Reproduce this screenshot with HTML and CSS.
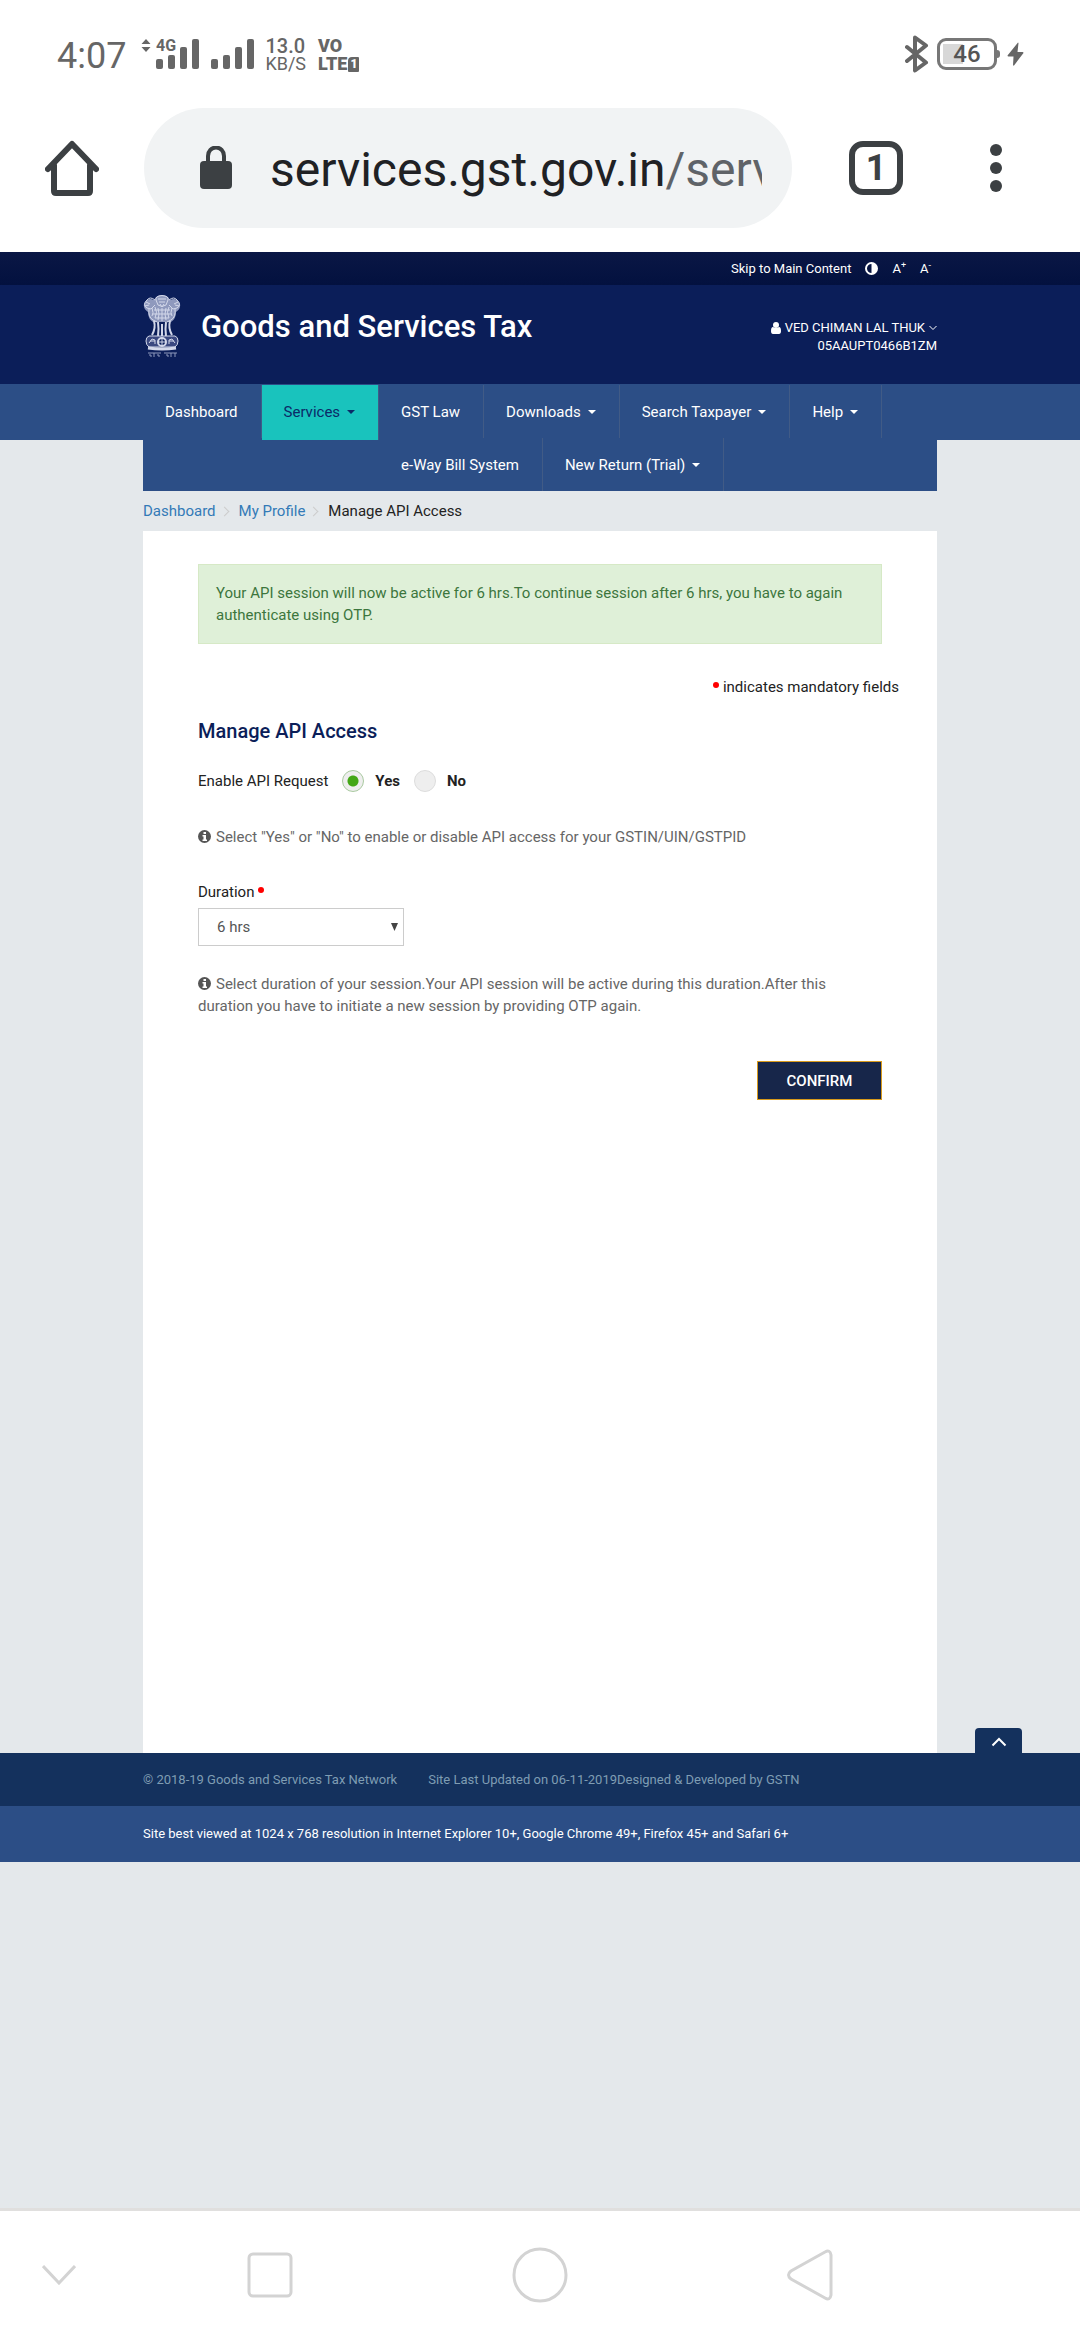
FILE: index.html
```html
<!DOCTYPE html>
<html lang="en">
<head>
<meta charset="utf-8">
<meta name="viewport" content="width=device-width, initial-scale=1">
<title>Manage API Access</title>
<link rel="stylesheet" href="styles.css">
</head>
<body>
<div class="status-bar">
  <div class="status-left">
    <span class="clock">4:07</span>
    <svg class="signal" width="114" height="44" viewBox="0 -6 114 44" fill="#666" aria-hidden="true">
      <path d="M5 1l4.500 5h-9zM5 14l4.500-5h-9z"/>
      <rect x="15" y="21" width="7" height="10" rx="2"/><rect x="27" y="17" width="7" height="14" rx="2"/><rect x="39" y="9" width="7" height="22" rx="2"/><rect x="51" y="1" width="7" height="30" rx="2"/>
      <rect x="70" y="21" width="7" height="10" rx="2"/><rect x="82" y="17" width="7" height="14" rx="2"/><rect x="94" y="9" width="7" height="22" rx="2"/><rect x="106" y="1" width="7" height="30" rx="2"/>
      <text x="15" y="13" class="net-type">4G</text>
    </svg>
    <span class="speed"><span class="speed-value">13.0</span><span class="speed-unit">KB/S</span></span>
    <span class="volte"><span>VO</span><span class="volte-row">LTE<span class="sim">1</span></span></span>
  </div>
  <div class="status-right">
    <svg width="24" height="38" viewBox="0 0 24 38" fill="none" stroke="#666" stroke-width="4" stroke-linejoin="round" stroke-linecap="round" aria-hidden="true"><path d="M2 12l19 15.500-11 8V2.500l11 8L2 26"/></svg>
    <span class="battery">46</span>
    <svg width="17" height="24" viewBox="0 0 17 24" fill="#666" aria-hidden="true"><path d="M11 0.500L0.500 13.500q0 1 1 1h5l-.5 9h1L16.500 11q0-1-1-1h-5l1-9z"/></svg>
  </div>
</div>

<div class="toolbar">
  <button class="tool" type="button" aria-label="Home"><svg width="54" height="56" viewBox="0 0 54 56" fill="none" stroke="#3c4043" stroke-width="6" stroke-linecap="round" stroke-linejoin="round"><path d="M3 29L27 4l24 25M9 25v26q0 2 2 2h32q2 0 2-2V25"/></svg></button>
  <div class="omnibox">
    <svg class="lock" width="32" height="44" viewBox="0 0 32 44" aria-hidden="true"><rect y="15" width="32" height="28" rx="4" fill="#3c4043"/><path d="M8 17v-7a8 8.500 0 0 1 16 0v7" fill="none" stroke="#3c4043" stroke-width="4"/></svg>
    <span class="url">services.gst.gov.in<span class="url-path">/serv</span></span>
  </div>
  <button class="tool tabs" type="button" aria-label="Open tabs">1</button>
  <button class="tool menu" type="button" aria-label="More options"><svg width="12" height="48" viewBox="0 0 12 48" fill="#3c4043"><circle cx="6" cy="6" r="6"/><circle cx="6" cy="24" r="6"/><circle cx="6" cy="42" r="6"/></svg></button>
</div>

<div class="site">
  <div class="skip-bar">
    <div class="container skip-links">
      <a href="#main">Skip to Main Content</a>
      <a href="#contrast" aria-label="Contrast"><svg width="13" height="13" viewBox="0 0 13 13"><circle cx="6.500" cy="6.500" r="5.500" fill="none" stroke="#fff" stroke-width="2"/><path d="M6.500 1v11a5.500 5.500 0 0 0 0-11z" fill="#fff"/></svg></a>
      <a href="#larger">A<sup>+</sup></a>
      <a href="#smaller">A<sup>-</sup></a>
    </div>
  </div>

  <header class="masthead">
    <div class="container masthead-row">
      <svg class="emblem" width="38" height="63" viewBox="0 0 38 63" fill="none" stroke="#d3d8ea" stroke-width="1" aria-hidden="true">
        <path fill="#8f99bd" stroke="none" d="M13 2q6-4 12 0l2 3q7-3 10 4 1 5-4 8 0 7-5 10H10q-5-3-5-10-5-3-4-8 3-7 10-4z"/>
        <path d="M13 5q-1-4 6-4.500Q26 1 25 5l-2 5q-4 3-8 0zM15 4h8M16 7h6M17 9l2 3 2-3M12 5Q7 1 4 5q-5 5 0 8l4 1 4-4M3 7l4 2M2 11l4-1M26 5q5-4 8 0 5 5 0 8l-4 1-4-4M35 7l-4 2M36 11l-4-1M6 14q-1 8 4 11l4 2M32 14q1 8-4 11l-4 2M9 13q2 5 0 8M12 12q3 5 0 11M15 13q2 6 0 12M19 13v13M23 13q-2 6 0 12M26 12q-3 5 0 11M29 13q-2 5 0 8M11 15h16M10 19h18M12 23h14"/>
        <path stroke-width="2" d="M11 26q2 7-2 14M15 27q1 7 0 14M19 29v12M23 27q-1 7 0 14M27 26q-2 7 2 14"/>
        <path fill="#3a4880" stroke-width="1" d="M6 41h26q3 1 3 5t-3 6H6q-3-2-3-6t3-5z"/>
        <path stroke-width="3" d="M5 53q14 2 28 0"/>
        <circle cx="19" cy="47" r="4" fill="#0b1e59" stroke-width="2"/><path d="M19 43v8M15 47h8M6 48l3-4 3 1v4M7 46h5M26 49v-4l3-1 3 4M26 46h5"/>
        <path stroke="#8f99bd" d="M5 58h13M21 58h13M6 60h2v2M11 58v4M14 60h2v2M23 60h2v2M28 58v4M32 58v4"/>
      </svg>
      <h1 class="brand">Goods and Services Tax</h1>
      <div class="account">
        <button class="account-name" type="button"><svg width="10" height="12" viewBox="0 0 10 12" fill="#fff" aria-hidden="true"><circle cx="5" cy="3" r="3"/><path d="M0 9q0-4 2-4 3 2 6 0 2 0 2 4 0 3-2 3H2q-2 0-2-3z"/></svg><span>VED CHIMAN LAL THUK</span><svg width="8" height="6" viewBox="0 0 8 6" fill="none" stroke="#fff" aria-hidden="true"><path d="M.5 1L4 4.500 7.500 1"/></svg></button>
        <div>05AAUPT0466B1ZM</div>
      </div>
    </div>
  </header>

  <nav class="main-nav" aria-label="Main">
    <ul class="container nav-list">
      <li><a href="#dashboard">Dashboard</a></li>
      <li class="active"><a class="has-menu" href="#services">Services</a></li>
      <li><a href="#law">GST Law</a></li>
      <li><a class="has-menu" href="#downloads">Downloads</a></li>
      <li><a class="has-menu" href="#search">Search Taxpayer</a></li>
      <li><a class="has-menu" href="#help">Help</a></li>
      <li><a href="#eway">e-Way Bill System</a></li>
      <li><a class="has-menu" href="#return">New Return (Trial)</a></li>
    </ul>
  </nav>

  <div class="container">
    <ol class="breadcrumb">
      <li><a href="#dashboard">Dashboard</a></li>
      <li><a href="#profile">My Profile</a></li>
      <li>Manage API Access</li>
    </ol>
    <main class="panel" id="main">
      <div class="alert" role="status">Your API session will now be active for 6 hrs.To continue session after 6 hrs, you have to again authenticate using OTP.</div>
      <p class="mandatory"><span class="dot"></span>indicates mandatory fields</p>
      <h2 class="heading">Manage API Access</h2>
      <form>
        <div class="enable" role="radiogroup" aria-labelledby="enable-label">
          <span id="enable-label">Enable API Request</span>
          <label class="choice"><input type="radio" name="enable" checked>Yes</label>
          <label class="choice"><input type="radio" name="enable">No</label>
        </div>
        <p class="help help-enable"><svg class="info" width="13" height="13" viewBox="0 0 13 13" aria-hidden="true"><circle cx="6.500" cy="6.500" r="6.500" fill="#555"/><path d="M5.500 2h2.500v2h-2.500zM4.500 5h3.500v4.500h1v1.500h-4.500v-1.500h1v-3h-1z" fill="#fff"/></svg>Select "Yes" or "No" to enable or disable API access for your GSTIN/UIN/GSTPID</p>
        <label class="field-label" for="duration">Duration<span class="dot"></span></label>
        <div class="select-wrap">
          <select id="duration"><option>6 hrs</option></select>
          <svg class="select-arrow" width="7" height="8" viewBox="0 0 7 8" fill="#444" aria-hidden="true"><path d="M0 0h7L3.500 8z"/></svg>
        </div>
        <p class="help help-duration"><svg class="info" width="13" height="13" viewBox="0 0 13 13" aria-hidden="true"><circle cx="6.500" cy="6.500" r="6.500" fill="#555"/><path d="M5.500 2h2.500v2h-2.500zM4.500 5h3.500v4.500h1v1.500h-4.500v-1.500h1v-3h-1z" fill="#fff"/></svg>Select duration of your session.Your API session will be active during this duration.After this duration you have to initiate a new session by providing OTP again.</p>
        <div class="actions"><button class="confirm" type="submit">CONFIRM</button></div>
      </form>
    </main>
  </div>

  <footer class="footer">
    <a class="to-top" href="#top" aria-label="Back to top"><svg width="16" height="10" viewBox="0 0 16 10" fill="none" stroke="#fff" stroke-width="2"><path d="M1.500 8.500L8 2l6.500 6.500"/></svg></a>
    <div class="footer-copy"><div class="container footer-row"><span>© 2018-19 Goods and Services Tax Network</span><span>Site Last Updated on 06-11-2019Designed &amp; Developed by GSTN</span></div></div>
    <div class="footer-note"><div class="container">Site best viewed at 1024 x 768 resolution in Internet Explorer 10+, Google Chrome 49+, Firefox 45+ and Safari 6+</div></div>
  </footer>
</div>

<div class="system-nav">
  <button class="sys hide" type="button" aria-label="Hide"><svg width="34" height="20" viewBox="0 0 34 20"><path d="M1 1l16 17L33 1"/></svg></button>
  <button class="sys" type="button" aria-label="Recent apps"><svg width="46" height="46" viewBox="0 0 46 46"><rect x="2" y="2" width="42" height="42" rx="4"/></svg></button>
  <button class="sys" type="button" aria-label="Home screen"><svg width="56" height="56" viewBox="0 0 56 56"><circle cx="28" cy="28" r="26"/></svg></button>
  <button class="sys" type="button" aria-label="Back"><svg width="46" height="52" viewBox="0 0 46 52"><path d="M38 3q5-3 6 3v40q-1 6-6 3L4 30q-5-4 0-8z"/></svg></button>
</div>
</body>
</html>
```
FILE: styles.css
```css
* { box-sizing: border-box; }

body {
  margin: 0;
  min-height: 100vh;
  display: flex;
  flex-direction: column;
  background: #fff;
  color: #222;
  font: 15px/22px Roboto, "Liberation Sans", sans-serif;
}

a { color: inherit; text-decoration: none; }
p, h1, h2, ul, ol { margin: 0; padding: 0; }
ul, ol { list-style: none; }
button { border: 0; padding: 0; background: none; font: inherit; color: inherit; }
svg { display: block; }

/* Phone status bar */
.status-bar {
  display: flex;
  justify-content: space-between;
  height: 108px;
  padding: 0 56px 0 57px;
  color: #666;
}
.status-left, .status-right { display: flex; align-items: center; height: 108px; }
.clock { padding-top: 3px; font-size: 36px; line-height: 36px; }
.signal { margin-left: 15px; }
.net-type { font-size: 16px; font-weight: 700; }
.speed { display: flex; flex-direction: column; margin-left: 10px; padding-top: 2px; line-height: 17px; }
.speed-value { font-size: 20px; font-weight: 500; }
.speed-unit { font-size: 18px; font-weight: 400; }
.volte { display: flex; flex-direction: column; margin-left: 12px; padding-top: 2px; font-size: 18px; line-height: 18px; font-weight: 900; }
.volte-row { display: flex; gap: 1px; }
.sim {
  width: 11px;
  height: 15px;
  margin-top: 2px;
  border-radius: 4px 1px 1px 1px;
  background: #666;
  color: #fff;
  font-size: 12px;
  line-height: 15px;
  text-align: center;
}
.status-right { gap: 8px; }
.battery {
  position: relative;
  width: 60px;
  height: 32px;
  margin-right: 2px;
  border: 3px solid #777;
  border-radius: 9px;
  background: linear-gradient(#d8d8d8, #d8d8d8) 3px 3px / 20px 20px no-repeat;
  color: #555;
  font-size: 24px;
  font-weight: 500;
  line-height: 27px;
  text-align: center;
}
.battery::after {
  content: "";
  position: absolute;
  top: 9px;
  right: -6px;
  width: 3px;
  height: 8px;
  border-radius: 0 3px 3px 0;
  background: #777;
}

/* Browser toolbar */
.toolbar { display: flex; align-items: center; height: 144px; padding: 0 78px 24px 45px; }
.tool { flex: none; }
.omnibox {
  flex: 1;
  display: flex;
  align-items: center;
  min-width: 0;
  height: 120px;
  margin-left: 45px;
  padding: 0 30px 0 56px;
  border-radius: 60px;
  background: #f1f3f4;
}
.lock { flex: none; margin-right: 38px; }
.url {
  flex: 1;
  overflow: hidden;
  padding-top: 4px;
  color: #202124;
  font-size: 48px;
  line-height: 60px;
  white-space: nowrap;
}
.url-path { color: #5f6368; }
.tabs {
  width: 54px;
  height: 54px;
  margin-left: 57px;
  border: 6px solid #3c4043;
  border-radius: 14px;
  color: #3c4043;
  font-size: 36px;
  font-weight: 700;
  line-height: 42px;
}
.menu { margin-left: 87px; }

/* Site */
.site { flex: 1; background: #e4e8eb; }
.container { width: 100%; max-width: 794px; margin: 0 auto; }

.skip-bar { background: linear-gradient(#0a1745, #03113f); color: #fff; font-size: 13px; }
.skip-links { display: flex; align-items: center; justify-content: flex-end; gap: 14px; height: 33px; padding-right: 6px; }
.skip-links sup { font-size: 9px; line-height: 0; }

.masthead { background: #0b1e59; color: #fff; }
.masthead-row { display: flex; height: 99px; padding-top: 10px; }
.brand { margin: 12px 0 0 20px; font-size: 31px; font-weight: 500; line-height: 40px; }
.account { margin: 24px 0 0 auto; font-size: 13px; line-height: 18px; text-align: right; }
.account-name { display: flex; align-items: center; gap: 4px; margin-left: auto; }

.main-nav { background: linear-gradient(#2c4e86 56px, transparent 56px); }
.nav-list { display: flow-root; padding-top: 1px; background: #2c4e86; color: #fff; }
.nav-list li { float: left; height: 53px; border-right: 1px solid #415b86; }
.nav-list a { display: flex; align-items: center; height: 53px; padding: 0 23px 0 22px; }
.nav-list .active { height: 55px; background: #19c3bd; color: #0b2a68; }
.has-menu::after {
  content: "";
  margin-left: 7px;
  border: 4px solid transparent;
  border-top-color: currentColor;
  border-bottom: 0;
}

.breadcrumb { display: flex; height: 40px; align-items: center; }
.breadcrumb a { color: #337ab7; }
.breadcrumb li { display: flex; align-items: center; }
.breadcrumb li + li::before {
  content: "";
  width: 6px;
  height: 6px;
  margin: 0 11px 0 5px;
  border: solid #ccc;
  border-width: 1px 1px 0 0;
  transform: rotate(45deg);
}

.panel { min-height: 1222px; padding: 33px 55px; background: #fff; }
.alert {
  height: 80px;
  padding: 17px;
  border: 1px solid #d6e9c6;
  background: #dff0d8;
  color: #3c763d;
}
.dot { display: inline-block; width: 6px; height: 6px; border-radius: 50%; background: #f00; vertical-align: 4px; }
.mandatory { margin: 32px -17px 0 0; text-align: right; }
.mandatory .dot { margin-right: 4px; }
.heading { margin-top: 20px; color: #0b1e59; font-size: 20px; font-weight: 500; line-height: 26px; }

.enable { display: flex; align-items: center; height: 24px; margin-top: 25px; }
.choice { display: flex; align-items: center; margin-left: 14px; font-weight: 700; }
.choice input {
  appearance: none;
  width: 22px;
  height: 22px;
  margin: 0 11px 0 0;
  border: 1px solid #ddd;
  border-radius: 50%;
  background: #eee;
}
.choice input:checked {
  border-color: #a9c9a0;
  background: radial-gradient(circle, #43a716 5px, #eee 6px);
}
.help { color: #666; }
.info { display: inline-block; margin-right: 5px; vertical-align: -1px; }
.help-enable { margin-top: 33px; }
.field-label { display: block; margin-top: 33px; }
.field-label .dot { margin-left: 4px; }
.select-wrap { position: relative; width: 206px; margin-top: 5px; }
.select-wrap select {
  display: block;
  appearance: none;
  width: 100%;
  height: 38px;
  padding: 0 18px;
  border: 1px solid #ccc;
  border-radius: 0;
  background: #fff;
  color: #555;
  font: inherit;
}
.select-arrow { position: absolute; top: 15px; right: 6px; pointer-events: none; }
.help-duration { margin-top: 27px; }
.actions { display: flex; justify-content: flex-end; margin-top: 44px; }
.confirm {
  width: 125px;
  height: 39px;
  border: 1px solid #d99b1c;
  background: #17264a;
  color: #fff;
  font-weight: 500;
}

.footer { position: relative; font-size: 13px; }
.to-top {
  position: absolute;
  right: 58px;
  bottom: 100%;
  display: flex;
  justify-content: center;
  width: 47px;
  height: 25px;
  padding-top: 9px;
  border-radius: 4px 4px 0 0;
  background: #14315d;
}
.footer-copy { padding: 16px 0 15px; background: #14315d; color: #7f9db3; }
.footer-row { display: flex; gap: 31px; }
.footer-note { padding: 17px 0; background: #2c4e86; color: #fff; }

/* System navigation */
.system-nav {
  display: grid;
  grid-template-columns: 11% 28% 22% 28%;
  align-items: center;
  height: 132px;
  padding-bottom: 2px;
  border-top: 3px solid #e0dfde;
}
.sys svg { margin: 0 auto; fill: none; stroke: #d3d3d3; stroke-width: 3; }
```
